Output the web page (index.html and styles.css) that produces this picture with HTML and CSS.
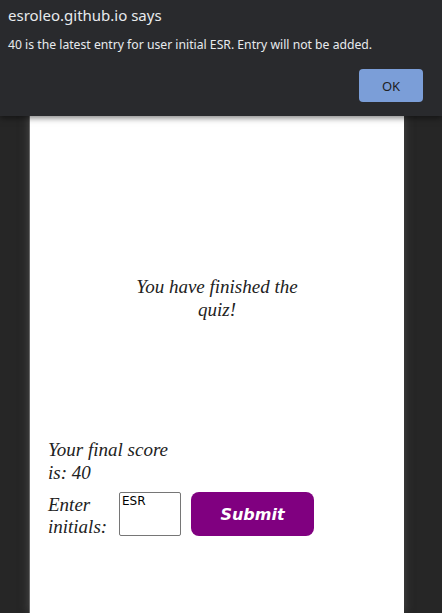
FILE: index.html
```html
<!DOCTYPE html>
<html>
<head>
<meta charset="utf-8">
<link rel="stylesheet" href="styles.css">
</head>
<body>
<div class="page">
  <main class="card">
    <h1 class="finished">You have finished the quiz!</h1>
    <p class="score">Your final score is: 40</p>
    <form class="entry">
      <label class="entry-label" for="initials">Enter initials:</label>
      <textarea id="initials" class="initials">ESR</textarea>
      <button type="button" class="submit">Submit</button>
    </form>
  </main>
</div>
<div class="dialog" role="alertdialog">
  <div class="dialog-title">esroleo.github.io says</div>
  <div class="dialog-msg">40 is the latest entry for user initial ESR. Entry will not be added.</div>
  <div class="dialog-actions"><button class="ok">OK</button></div>
</div>
</body>
</html>
```
FILE: styles.css
```css
html, body {
  margin: 0;
  padding: 0;
}
body {
  background: #262626;
  width: 442px;
  height: 613px;
  overflow: hidden;
  position: relative;
}
.page {
  padding-left: 29px;
  display: flex;
}
.card {
  width: 375px;
  height: 613px;
  background: #fff;
  border-left: 1px solid #6a6a6a;
  box-sizing: border-box;
  box-shadow: 0 0 9px rgba(90, 90, 90, 0.7);
  font-family: "Liberation Serif", serif;
  font-style: italic;
  color: #222;
  padding-top: 275px;
  display: flex;
  flex-direction: column;
}
.finished {
  margin: 0 auto;
  width: 180px;
  text-align: center;
  font-size: 19px;
  font-weight: normal;
  line-height: 23px;
}
.score {
  margin: 117px 0 0 18px;
  width: 125px;
  font-size: 19px;
  line-height: 23px;
}
.entry {
  margin: 8px 0 0 18px;
  display: flex;
  align-items: flex-start;
}
.entry-label {
  width: 62px;
  font-size: 19px;
  line-height: 22px;
  padding-top: 2px;
  margin-right: 9px;
}
.initials {
  width: 62px;
  height: 44px;
  box-sizing: border-box;
  border: 1px solid #767676;
  border-radius: 2px;
  padding: 1px 2px;
  font-family: "DejaVu Sans", sans-serif;
  font-style: normal;
  font-size: 12px;
  resize: none;
  margin: 0 10px 0 0;
}
.submit {
  width: 123px;
  height: 44px;
  border: none;
  border-radius: 8px;
  background: #800080;
  color: #fff;
  font-family: "DejaVu Sans", sans-serif;
  font-style: italic;
  font-weight: bold;
  font-size: 16px;
}
.dialog {
  position: absolute;
  top: 0;
  left: 0;
  right: 0;
  height: 116px;
  background: #292a2d;
  box-shadow: 0 2px 6px rgba(0, 0, 0, 0.5);
  font-family: "Noto Sans", sans-serif;
  color: #e8eaed;
  padding: 0 19px 0 8px;
  box-sizing: border-box;
}
.dialog-title {
  font-size: 15px;
  line-height: 20px;
  padding-top: 5px;
}
.dialog-msg {
  font-size: 12.2px;
  line-height: 18px;
  margin-top: 11px;
}
.dialog-actions {
  display: flex;
  justify-content: flex-end;
  margin-top: 15px;
}
.ok {
  width: 64px;
  height: 33px;
  border: none;
  border-radius: 4px;
  background: #7b9ed8;
  color: #202124;
  font-family: "Noto Sans", sans-serif;
  font-size: 13px;
}
```
